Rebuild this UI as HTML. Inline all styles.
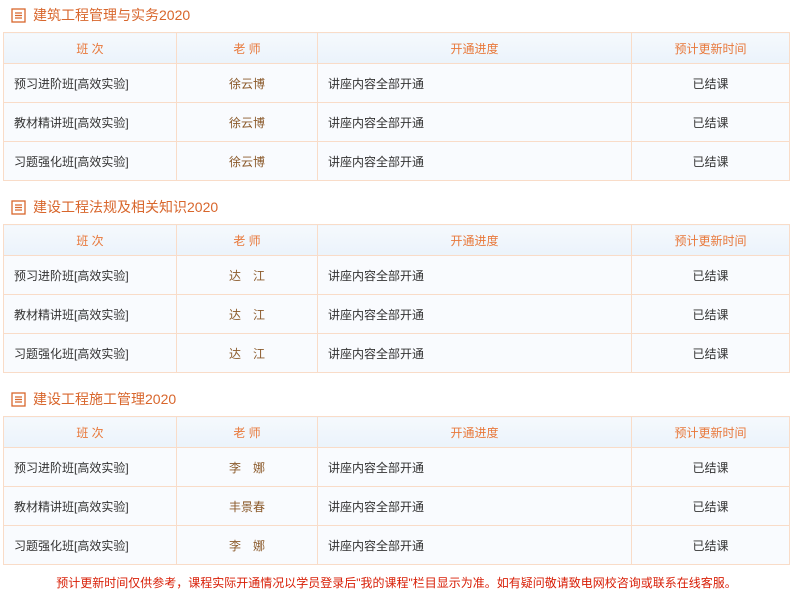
<!DOCTYPE html>
<html><head><meta charset="utf-8"><style>
body{margin:0;width:793px;height:593px;background:#fff;font-family:"Liberation Sans","Noto Sans CJK SC",sans-serif;font-size:12px;color:#333;position:relative;overflow:hidden}
.t{position:absolute;left:11px;height:18px;line-height:18px;font-size:14px;color:#d8662c}
.t svg{position:absolute;left:0;top:2px}
.t span{position:absolute;left:22px;white-space:nowrap}
table{position:absolute;left:3px;width:787px;border-collapse:collapse;table-layout:fixed}
td{border:1px solid #f9dcc8;padding:0;background:#f9fbfe;height:38px;text-align:center}
tr.h td{height:30px;background:linear-gradient(#f5f9fd,#ebf3fb);color:#e8783a}
td.l{text-align:left;padding-left:10px}
td.n{color:#8b5a2b}
.f{position:absolute;top:574px;left:0;width:793px;text-align:center;color:#d81e06;font-size:12px}
</style></head><body>
<div class="t" style="top:6px"><svg width="15" height="15" viewBox="0 0 15 15"><rect x="1" y="1" width="13" height="13" fill="none" stroke="#d8662c" stroke-width="1.3"/><path d="M4 5h7M4 7.5h7M4 10h7" stroke="#d8662c" stroke-width="1.2"/></svg><span>建筑工程管理与实务2020</span></div>
<table style="top:32px"><colgroup><col style="width:173px"><col style="width:141px"><col style="width:314px"><col></colgroup>
<tr class="h"><td>班 次</td><td>老 师</td><td>开通进度</td><td>预计更新时间</td></tr>
<tr><td class="l">预习进阶班[高效实验]</td><td class="n">徐云博</td><td class="l">讲座内容全部开通</td><td>已结课</td></tr>
<tr><td class="l">教材精讲班[高效实验]</td><td class="n">徐云博</td><td class="l">讲座内容全部开通</td><td>已结课</td></tr>
<tr><td class="l">习题强化班[高效实验]</td><td class="n">徐云博</td><td class="l">讲座内容全部开通</td><td>已结课</td></tr>
</table>
<div class="t" style="top:198px"><svg width="15" height="15" viewBox="0 0 15 15"><rect x="1" y="1" width="13" height="13" fill="none" stroke="#d8662c" stroke-width="1.3"/><path d="M4 5h7M4 7.5h7M4 10h7" stroke="#d8662c" stroke-width="1.2"/></svg><span>建设工程法规及相关知识2020</span></div>
<table style="top:224px"><colgroup><col style="width:173px"><col style="width:141px"><col style="width:314px"><col></colgroup>
<tr class="h"><td>班 次</td><td>老 师</td><td>开通进度</td><td>预计更新时间</td></tr>
<tr><td class="l">预习进阶班[高效实验]</td><td class="n">达　江</td><td class="l">讲座内容全部开通</td><td>已结课</td></tr>
<tr><td class="l">教材精讲班[高效实验]</td><td class="n">达　江</td><td class="l">讲座内容全部开通</td><td>已结课</td></tr>
<tr><td class="l">习题强化班[高效实验]</td><td class="n">达　江</td><td class="l">讲座内容全部开通</td><td>已结课</td></tr>
</table>
<div class="t" style="top:390px"><svg width="15" height="15" viewBox="0 0 15 15"><rect x="1" y="1" width="13" height="13" fill="none" stroke="#d8662c" stroke-width="1.3"/><path d="M4 5h7M4 7.5h7M4 10h7" stroke="#d8662c" stroke-width="1.2"/></svg><span>建设工程施工管理2020</span></div>
<table style="top:416px"><colgroup><col style="width:173px"><col style="width:141px"><col style="width:314px"><col></colgroup>
<tr class="h"><td>班 次</td><td>老 师</td><td>开通进度</td><td>预计更新时间</td></tr>
<tr><td class="l">预习进阶班[高效实验]</td><td class="n">李　娜</td><td class="l">讲座内容全部开通</td><td>已结课</td></tr>
<tr><td class="l">教材精讲班[高效实验]</td><td class="n">丰景春</td><td class="l">讲座内容全部开通</td><td>已结课</td></tr>
<tr><td class="l">习题强化班[高效实验]</td><td class="n">李　娜</td><td class="l">讲座内容全部开通</td><td>已结课</td></tr>
</table>
<div class="f">预计更新时间仅供参考，课程实际开通情况以学员登录后"我的课程"栏目显示为准。如有疑问敬请致电网校咨询或联系在线客服。</div>
</body></html>
